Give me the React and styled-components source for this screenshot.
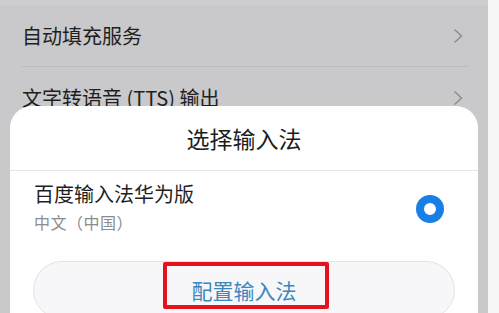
import styled, { createGlobalStyle } from 'styled-components';

const GlobalStyle = createGlobalStyle`
  html, body {
    margin: 0;
    padding: 0;
    height: 313px;
    overflow: hidden;
    background: #f6f6f6;
  }
  body {
    font-family: "Noto Sans CJK SC", "Noto Sans", sans-serif;
  }
`;

// Contenedor principal: la pantalla gris + la franja blanca de la derecha
const Screen = styled.div`
  display: flex;
  height: 313px;
`;

const Main = styled.div`
  position: relative;
  width: 488px;
  height: 313px;
  background: #c9c9cb;
  overflow: hidden;
`;

const SideStrip = styled.div`
  flex: 1;
  background: #f7f7f7;
`;

const TopEdge = styled.div`
  height: 5px;
  background: #cdcdcf;
`;

const List = styled.div`
  padding: 0 20px 0 22px;
`;

const Row = styled.div`
  display: flex;
  align-items: center;
  justify-content: space-between;
  height: ${(p) => p.h || 61}px;
  border-bottom: ${(p) => (p.last ? 'none' : '1px solid #bcbcbe')};
  color: #1f1f1f;
  font-size: 20px;
`;

const Chevron = styled.svg`
  width: 10px;
  height: 16px;
  margin-right: 5px;
  flex-shrink: 0;
`;

// Hoja de diálogo que se superpone a la lista
const Sheet = styled.div`
  position: absolute;
  left: 10px;
  top: 106px;
  width: 468px;
  height: 240px;
  background: #fff;
  border-radius: 22px 22px 0 0;
`;

const SheetTitle = styled.div`
  height: 64px;
  display: flex;
  align-items: center;
  justify-content: center;
  font-size: 23px;
  color: #1d1d1d;
  border-bottom: 1px solid #e6e6e8;
`;

const Option = styled.div`
  display: flex;
  align-items: center;
  justify-content: space-between;
  padding: 10px 34px 0 24px;
`;

const OptionText = styled.div`
  display: flex;
  flex-direction: column;
`;

const OptionName = styled.div`
  font-size: 20px;
  line-height: 26px;
  color: #1f1f1f;
`;

const OptionSub = styled.div`
  margin-top: 4px;
  font-size: 16px;
  line-height: 22px;
  color: #8c8c8c;
  letter-spacing: 0.5px;
`;

const Radio = styled.div`
  width: 28px;
  height: 28px;
  box-sizing: border-box;
  border-radius: 50%;
  border: 8px solid #1a7fe4;
  background: #fff;
  margin-top: 4px;
`;

const ConfigButton = styled.div`
  position: relative;
  margin: 28px 23px 0;
  height: 58px;
  box-sizing: border-box;
  border: 1.5px solid #e3e3e6;
  border-radius: 29px;
  background: #f7f6f9;
  display: flex;
  align-items: center;
  justify-content: center;
  font-size: 21px;
  color: #3b88bd;
`;

// Recuadro rojo de anotación encima del botón
const Highlight = styled.div`
  position: absolute;
  left: 129px;
  top: 0px;
  width: 166px;
  height: 47px;
  box-sizing: border-box;
  border: 4px solid #e5121b;
  border-radius: 2px;
`;

const ChevronIcon = () => (
  <Chevron viewBox="0 0 10 16">
    <polyline points="1.5,1.5 8.5,8 1.5,14.5" fill="none" stroke="#8d8d8f" strokeWidth="1.5" />
  </Chevron>
);

const App = () => {
  return (
    <>
      <GlobalStyle />
      <Screen>
        <Main>
          <TopEdge />
          <List>
            <Row h={61}>
              <span>自动填充服务</span>
              <ChevronIcon />
            </Row>
            <Row last>
              <span>文字转语音 (TTS) 输出</span>
              <ChevronIcon />
            </Row>
          </List>
          <Sheet>
            <SheetTitle>选择输入法</SheetTitle>
            <Option>
              <OptionText>
                <OptionName>百度输入法华为版</OptionName>
                <OptionSub>中文（中国）</OptionSub>
              </OptionText>
              <Radio />
            </Option>
            <ConfigButton>
              配置输入法
              <Highlight />
            </ConfigButton>
          </Sheet>
        </Main>
        <SideStrip />
      </Screen>
    </>
  );
};

export default App;
